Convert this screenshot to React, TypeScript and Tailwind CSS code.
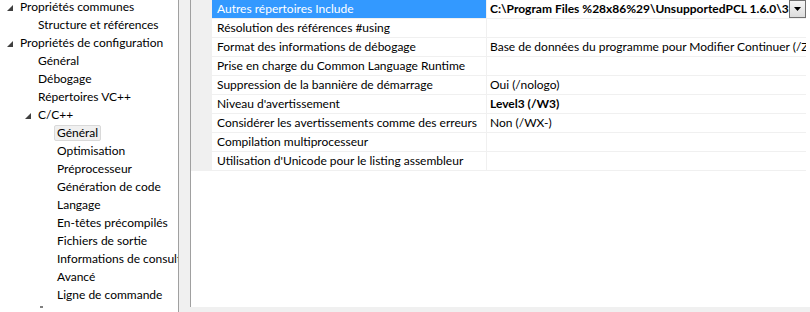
import React from "react";

const font = { fontFamily: 'Lato, "Noto Sans", sans-serif' };

type TreeItem = { label: string; level: number; expander?: boolean; selected?: boolean };

const tree: TreeItem[] = [
  { label: "Propriétés communes", level: 0, expander: true },
  { label: "Structure et références", level: 1 },
  { label: "Propriétés de configuration", level: 0, expander: true },
  { label: "Général", level: 1 },
  { label: "Débogage", level: 1 },
  { label: "Répertoires VC++", level: 1 },
  { label: "C/C++", level: 1, expander: true },
  { label: "Général", level: 2, selected: true },
  { label: "Optimisation", level: 2 },
  { label: "Préprocesseur", level: 2 },
  { label: "Génération de code", level: 2 },
  { label: "Langage", level: 2 },
  { label: "En-têtes précompilés", level: 2 },
  { label: "Fichiers de sortie", level: 2 },
  { label: "Informations de consultation", level: 2 },
  { label: "Avancé", level: 2 },
  { label: "Ligne de commande", level: 2 },
];

type Row = { name: string; value: string; bold?: boolean; selected?: boolean };

const rows: Row[] = [
  { name: "Autres répertoires Include", value: "C:\\Program Files %28x86%29\\UnsupportedPCL 1.6.0\\3rdParty", bold: true, selected: true },
  { name: "Résolution des références #using", value: "" },
  { name: "Format des informations de débogage", value: "Base de données du programme pour Modifier  Continuer (/ZI)" },
  { name: "Prise en charge du Common Language Runtime", value: "" },
  { name: "Suppression de la bannière de démarrage", value: "Oui (/nologo)" },
  { name: "Niveau d'avertissement", value: "Level3 (/W3)", bold: true },
  { name: "Considérer les avertissements comme des erreurs", value: "Non (/WX-)" },
  { name: "Compilation multiprocesseur", value: "" },
  { name: "Utilisation d'Unicode pour le listing assembleur", value: "" },
];

function Expander() {
  return (
    <svg width="6" height="6" viewBox="0 0 6 6" className="block">
      <polygon points="6,0 6,6 0,6" fill="#404040" />
    </svg>
  );
}

export default function App() {
  return (
    <div
      className="w-[810px] h-[312px] flex bg-[#f0f0f0] overflow-hidden text-[12px] text-black"
      style={font}
    >
      {/* Tree */}
      <div className="w-[179px] h-full bg-white border-r border-[#a0a0a0] overflow-hidden shrink-0">
        <div className="mt-[-2px] flex flex-col">
          {tree.map((t, i) => (
            <div key={i} className="h-[18px] relative whitespace-nowrap leading-[18px]">
              {t.expander && (
                <div
                  className={
                    "absolute top-[7px] " + (t.level === 0 ? "left-[7px]" : "left-[25px]")
                  }
                >
                  <Expander />
                </div>
              )}
              <div
                className={
                  "absolute top-0 " +
                  (t.level === 0 ? "left-[20px]" : t.level === 1 ? "left-[38px]" : "left-[54px]")
                }
              >
                {t.selected ? (
                  <span className="inline-block h-[16px] mt-[1px] leading-[14px] px-[2px] bg-[#f0f0f0] border border-[#d9d9d9] rounded-[2px]">
                    {t.label}
                  </span>
                ) : (
                  <span className={t.level === 2 ? "pl-[3px]" : ""}>{t.label}</span>
                )}
              </div>
            </div>
          ))}
        </div>
        <div className="relative">
          <div className="absolute left-[40px] top-[2px] w-[3px] h-[2px] bg-[#808080]" />
        </div>
      </div>

      {/* Gap */}
      <div className="w-[11px] h-full shrink-0" />

      {/* Property grid */}
      <div className="flex-1 h-[307px] bg-white border-l border-[#a0a0a0] flex flex-col">
        {rows.map((r, i) => (
          <div key={i} className="h-[19px] flex border-b border-[#f0f0f0] w-[615px] shrink-0">
            <div className="w-[21px] h-full bg-[#f0f0f0] shrink-0" />
            <div
              className={
                "w-[275px] h-full shrink-0 pl-[5px] leading-[18px] whitespace-nowrap overflow-hidden border-r border-[#f0f0f0] " +
                (r.selected ? "bg-[#3399ff] text-white" : "")
              }
            >
              {r.name}
            </div>
            <div className="flex-1 h-full relative overflow-hidden">
              <div
                className={
                  "pl-[3px] leading-[18px] whitespace-nowrap overflow-hidden " +
                  (r.bold ? "font-bold " : "") +
                  (r.selected ? "pr-[18px]" : "")
                }
              >
                {r.value}
              </div>
              {r.selected && (
                <div className="absolute right-0 top-0 w-[17px] h-[18px] border border-[#707070] bg-gradient-to-b from-[#f6f6f6] to-[#dcdcdc] flex items-center justify-center">
                  <svg width="7" height="4" viewBox="0 0 7 4">
                    <polygon points="0,0 7,0 3.5,4" fill="#000" />
                  </svg>
                </div>
              )}
            </div>
          </div>
        ))}
      </div>
    </div>
  );
}
